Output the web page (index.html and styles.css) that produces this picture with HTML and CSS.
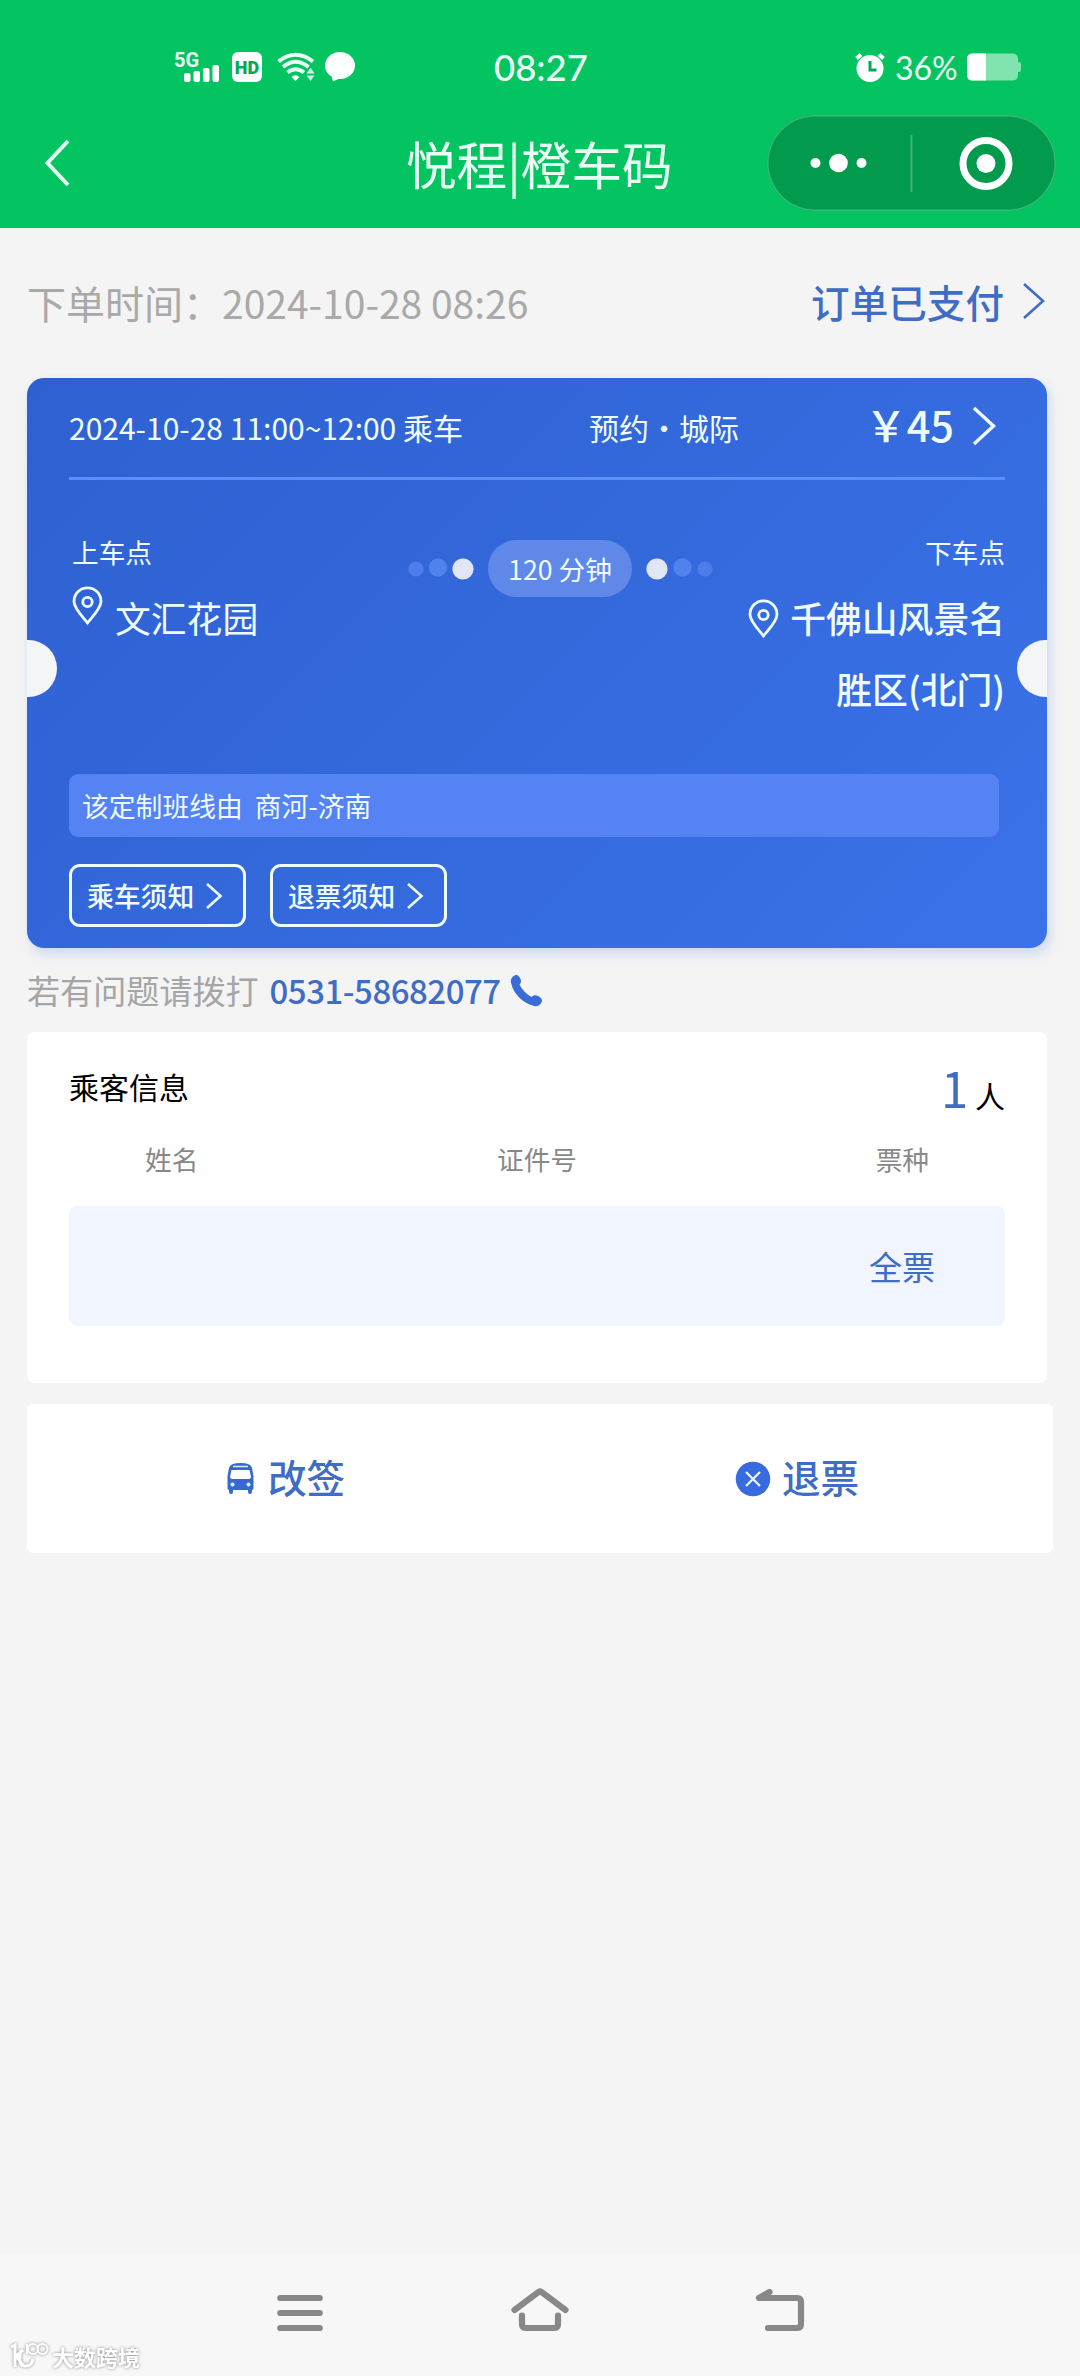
FILE: index.html
```html
<!DOCTYPE html>
<html lang="zh-CN">
<head>
<meta charset="utf-8">
<title>悦程|橙车码</title>
<link rel="stylesheet" href="styles.css">
</head>
<body>
<div class="screen">
  <header class="top">
    <div class="status">
      <div class="status-left">
        <div class="signal">
          <span class="signal-label">5G</span>
          <svg width="36" height="18" viewBox="0 0 36 18" fill="#fff"><rect x="0" y="9" width="6.5" height="9" rx="2"/><rect x="9.5" y="7" width="6.500" height="11" rx="2"/><rect x="19" y="4" width="6.500" height="14" rx="2"/><rect x="28.500" y="1" width="6.500" height="17" rx="2"/></svg>
        </div>
        <span class="hd">HD</span>
        <svg class="wifi" width="38" height="30" viewBox="0 0 38 30" fill="none" stroke="#e9fff3" stroke-width="4"><path d="M1.500 9.500Q18.500-4 36 9.500"/><path d="M6 15Q18.500 4.500 31.500 15"/><path d="M10.500 20.500Q18.500 14 27 20.500"/><path d="M14.500 25Q18.500 21.500 22.500 25L18.500 29Z" fill="#fff" stroke="none"/><path d="M29.500 21.500L33.500 15.500L37.500 21.500ZM29.500 23.500H37.500L33.500 29Z" fill="#c9f5dc" stroke="none"/></svg>
        <svg width="30" height="30" viewBox="0 0 30 30" fill="#fff"><ellipse cx="15" cy="13.500" rx="15" ry="13.500"/><path d="M6 22L8 29.500L18 25Z"/></svg>
      </div>
      <span class="clock">08:27</span>
      <div class="status-right">
        <svg width="30" height="30" viewBox="0 0 30 30"><circle cx="15" cy="16.500" r="13.500" fill="#fff"/><path d="M1.500 6.500L6 2.500M28.500 6.500L24 2.500" stroke="#fff" stroke-width="4"/><path d="M15 9V18H21.500" fill="none" stroke="#04a955" stroke-width="3"/></svg>
        <span class="percent">36%</span>
        <svg width="55" height="28" viewBox="0 0 55 28"><path d="M6 0.500H45Q51 0.500 51 6V9H52Q54 9 54 12V16Q54 19 52 19H51V22Q51 27.500 45 27.500H6Q0 27.500 0 22V6Q0 0.500 6 0.500Z" fill="#80e3b0"/><path d="M6 0.500H19V27.500H6Q0 27.500 0 22V6Q0 0.500 6 0.500Z" fill="#fff"/></svg>
      </div>
    </div>
    <div class="titlebar">
      <svg class="back" width="28" height="50" viewBox="0 0 28 50" fill="none" stroke="#e6fff1" stroke-width="4"><path d="M26 3L5.500 25L26 47"/></svg>
      <h1 class="title">悦程|橙车码</h1>
      <div class="capsule">
        <svg width="289" height="96" viewBox="0 0 289 96"><g fill="#fff"><circle cx="48.500" cy="48" r="5"/><circle cx="71.500" cy="48" r="9.300"/><circle cx="94.500" cy="48" r="5"/><circle cx="219" cy="48.500" r="9.500"/></g><path d="M144.500 20V77" stroke="#40b57b" stroke-width="1.800"/><circle cx="219" cy="48.500" r="23" fill="none" stroke="#fff" stroke-width="7"/></svg>
      </div>
    </div>
  </header>

  <main class="content">
    <div class="order-row">
      <span class="order-time">下单时间：2024-10-28 08:26</span>
      <span class="order-state">订单已支付
        <svg width="24" height="38" viewBox="0 0 24 38" fill="none" stroke="#3f6cc4" stroke-width="2.600"><path d="M2 2L21 19L2 36"/></svg>
      </span>
    </div>

    <section class="ticket">
      <div class="ticket-head">
        <span>2024-10-28 11:00~12:00 乘车</span>
        <span class="kind">预约・城际</span>
        <span class="price">￥45<svg width="26" height="42" viewBox="0 0 26 42" fill="none" stroke="#effcff" stroke-width="3.400"><path d="M3 3L22.500 21L3 39"/></svg></span>
      </div>
      <div class="route">
        <div class="stop stop-start">
          <div class="stop-label">上车点</div>
          <div class="stop-name">
            <svg class="pin pin-start" width="31" height="39" viewBox="0 0 31 39" fill="none" stroke="#effcff" stroke-width="2.800"><path d="M15.500 37C11 31 2 22.500 2 15.500C2 7.500 8 1.800 15.500 1.800S29 7.500 29 15.500C29 22.500 20 31 15.500 37Z"/><circle cx="15.500" cy="16" r="4.700"/></svg>
            <span>文汇花园</span>
          </div>
        </div>
        <div class="duration">
          <svg width="60" height="24" viewBox="0 0 60 24"><circle cx="13" cy="12" r="7.600" fill="#4c7deb"/><circle cx="35" cy="10.500" r="9.200" fill="#5082ee"/><circle cx="60" cy="12" r="10.600" fill="#e0e6f6"/></svg>
          <span class="pill">120 分钟</span>
          <svg width="60" height="24" viewBox="0 0 60 24"><circle cx="0" cy="12" r="10.600" fill="#e0e6f6"/><circle cx="25.500" cy="10.500" r="9.200" fill="#5082ee"/><circle cx="48" cy="12" r="7.600" fill="#4c7deb"/></svg>
        </div>
        <div class="stop stop-end">
          <div class="stop-label">下车点</div>
          <div class="stop-name">
            <svg class="pin" width="31" height="39" viewBox="0 0 31 39" fill="none" stroke="#effcff" stroke-width="2.800"><path d="M15.500 37C11 31 2 22.500 2 15.500C2 7.500 8 1.800 15.500 1.800S29 7.500 29 15.500C29 22.500 20 31 15.500 37Z"/><circle cx="15.500" cy="16" r="4.700"/></svg>
            <span>千佛山风景名<br>胜区(北门)</span>
          </div>
        </div>
      </div>
      <div class="line-note">该定制班线由  商河-济南</div>
      <div class="notices">
        <span class="notice">乘车须知<svg width="20" height="28" viewBox="0 0 20 28" fill="none" stroke="#effcff" stroke-width="2.600"><path d="M3 2L16.500 14L3 26"/></svg></span>
        <span class="notice">退票须知<svg width="20" height="28" viewBox="0 0 20 28" fill="none" stroke="#effcff" stroke-width="2.600"><path d="M3 2L16.500 14L3 26"/></svg></span>
      </div>
    </section>

    <div class="help">
      <span>若有问题请拨打</span>
      <span class="phone">0531-58682077</span>
      <svg width="33" height="33" viewBox="0 0 33 33"><path d="M4.500 1.500C7 0 9.500 2 10.500 5C11.500 7.500 11 9 9.500 10.500C12 15.500 16 20 21.500 23C23.500 21 25.500 20.500 28 22C31 23.500 33 26 31.500 28.500C30 31.500 27 33 24 32C12 28.500 3 19.500 1 8.500C0.500 5.500 1.500 3 4.500 1.500Z" fill="#3a6cd8"/></svg>
    </div>

    <section class="passengers">
      <div class="passengers-head">
        <span>乘客信息</span>
        <span><b class="count">1</b> 人</span>
      </div>
      <div class="columns"><span>姓名</span><span>证件号</span><span>票种</span></div>
      <div class="passenger">全票</div>
    </section>

    <section class="actions">
      <span class="action">
        <svg width="29" height="33" viewBox="0 0 29 33"><path d="M1.500 26V14L3 6Q4 1 14.500 1T26 6L27.500 14V26Q27.500 28 26 28V30Q26 32 24 32T22 30V28H7V30Q7 32 5 32T3 30V28Q1.500 28 1.500 26Z" fill="#3a68d2"/><path d="M7 4.500H22" stroke="#dfe9ff" stroke-width="1.500"/><path d="M5.500 8H23.500L25 15Q25 17 22.500 17H6.500Q4 17 4 15Z" fill="#fff"/><circle cx="6.500" cy="22.500" r="2" fill="#dff2ff"/><circle cx="22.500" cy="22.500" r="2" fill="#dff2ff"/></svg>
        <span class="action-label">改签</span>
      </span>
      <span class="action action-refund">
        <svg width="36" height="36" viewBox="0 0 36 36"><circle cx="18" cy="18" r="17.300" fill="#386ae0"/><path d="M11 11L25 25M25 11L11 25" stroke="#e5f4ff" stroke-width="2.300"/></svg>
        <span class="action-label">退票</span>
      </span>
    </section>
  </main>

  <nav class="navbar">
    <svg width="60" height="50" viewBox="0 0 60 50" fill="none" stroke="#888" stroke-width="6.200" stroke-linecap="round"><path d="M10.300 10H49.700M10.300 25H49.700M10.300 40H49.700"/></svg>
    <svg width="60" height="50" viewBox="0 0 60 50" fill="none" stroke="#888" stroke-width="6.200" stroke-linecap="round" stroke-linejoin="round"><path d="M4.500 22L28.500 4Q30 3 31.500 4L55.500 22M12 27.500V36Q12 40 16 40H44Q48 40 48 36V27.500"/></svg>
    <svg width="60" height="50" viewBox="0 0 60 50" fill="none" stroke="#888" stroke-width="6.200" stroke-linecap="round" stroke-linejoin="round"><path d="M29.500 4L19 10H57Q61 10 61 14V36Q61 40 57 40H28" transform="translate(-10)"/></svg>
  </nav>
  <div class="watermark">
    <svg width="40" height="28" viewBox="0 0 40 28" fill="none" stroke="#fff" stroke-width="3"><path d="M2 5L6 3V25M14 8L7 14L14 23M12 8Q8 25 17 24Q23 24 24 17"/><path d="M18 2V12" stroke-width="2"/><circle cx="24" cy="7" r="5" stroke-width="2"/><circle cx="33.500" cy="7" r="5" stroke-width="2"/></svg>
    <span>大数跨境</span>
  </div>
</div>
</body>
</html>
```
FILE: styles.css
```css
* { box-sizing: border-box; }
body {
  margin: 0;
  background: #f4f4f4;
  font-family: "Noto Sans CJK SC", sans-serif;
  color: #000;
}
svg { display: block; flex: none; overflow: visible; }
.screen {
  position: relative;
  display: flex;
  flex-direction: column;
  width: 1080px;
  height: 2376px;
  overflow: hidden;
}

/* Green status bar and mini-program title */
.top {
  height: 228px;
  padding-top: 43px;
  background: #04c361;
  color: #e9fff3;
}
.status {
  display: grid;
  grid-template-columns: 320px 1fr auto;
  align-items: center;
  height: 46px;
  padding: 0 58px 0 174px;
}
.status-left { display: flex; align-items: center; }
.signal {
  position: relative;
  width: 58px;
  height: 30px;
  padding: 12px 0 0 10px;
}
.signal-label {
  position: absolute;
  left: 0;
  top: -2px;
  font: 700 20px/20px Roboto, sans-serif;
}
.hd {
  width: 30px;
  height: 30px;
  margin-right: 15px;
  border-radius: 6px;
  background: #fff;
  color: #04a955;
  font: 900 18px/31px Roboto, sans-serif;
  text-align: center;
}
.wifi { margin-right: 10px; }
.clock { font: 500 36.500px/46px Lato, sans-serif; padding-top: 1px; }
.status-right { display: flex; align-items: center; }
.percent {
  width: 72px;
  margin: 2px 0 0 10px;
  font: 400 32px/40px Lato, sans-serif;
}
.titlebar {
  display: grid;
  grid-template-columns: 364px auto 1fr;
  align-items: center;
  height: 96px;
  margin-top: 26px;
  padding: 0 24px 0 42px;
}
.title {
  margin: 0;
  width: 268px;
  font-size: 50.600px;
  font-weight: 400;
  line-height: 96px;
  white-space: nowrap;
}
.capsule {
  justify-self: end;
  width: 289px;
  height: 96px;
  border-radius: 48px;
  background: #029b4e;
  box-shadow: inset 0 0 0 1.500px #37ba78;
}

/* Order page */
.content { flex: 1; padding: 0 33px 0 27px; }
.order-row {
  display: flex;
  justify-content: space-between;
  height: 150px;
  font-size: 39px;
  line-height: 148px;
  color: #a9a9a9;
}
.order-state {
  display: flex;
  align-items: center;
  gap: 18px;
  height: 146px;
  padding-right: 1px;
  font-size: 38.600px;
  font-weight: 500;
  line-height: 142px;
  color: #3f6cc4;
}
.ticket {
  position: relative;
  height: 570px;
  padding: 0 42px;
  border-radius: 17px;
  background: linear-gradient(135deg, #2e60d0 0%, #3469dc 50%, #3b72ea 100%);
  box-shadow: 3px 6px 12px rgba(52, 105, 220, 0.2);
  color: #effcff;
}
.ticket::before, .ticket::after {
  content: "";
  position: absolute;
  top: 262px;
  width: 30px;
  height: 57px;
  background: #f4f5f7;
}
.ticket::before { left: 0; border-radius: 0 28.500px 28.500px 0; }
.ticket::after { right: 0; border-radius: 28.500px 0 0 28.500px; }
.ticket-head {
  display: grid;
  grid-template-columns: 520px 1fr auto;
  align-items: center;
  height: 102px;
  border-bottom: 3px solid #5b8ff9;
  font-size: 30px;
  line-height: 97px;
}
.price {
  display: flex;
  align-items: center;
  gap: 17px;
  padding-right: 8px;
  font-size: 41.500px;
  font-weight: 500;
  line-height: 90px;
  margin-top: -7px;
}
.price svg { margin-top: 3px; }
.route {
  display: flex;
  justify-content: space-between;
  height: 294px;
  padding: 52px 0 0 3px;
}
.stop { width: 260px; }
.stop-start { width: 303px; }
.stop-label { font-size: 26.700px; line-height: 40px; }
.stop-name {
  display: flex;
  gap: 12px;
  padding-top: 10px;
  font-size: 35.800px;
  line-height: 71px;
}
.stop-end { text-align: right; }
.stop-end .stop-name { justify-content: flex-end; font-weight: 500; gap: 11px; }
.pin { margin-top: 17px; }
.pin-start { margin-top: 4px; }
.duration { display: flex; align-items: center; gap: 25px; height: 57px; margin-top: 8px; }
.pill {
  width: 144px;
  border-radius: 29px;
  background: #5f88e8;
  font-size: 26.700px;
  line-height: 57px;
  text-align: center;
}
.line-note {
  width: 930px;
  height: 63px;
  padding-left: 13px;
  border-radius: 9px;
  background: #5583f4;
  font-size: 26.800px;
  line-height: 63px;
  white-space: pre;
}
.notices { display: flex; gap: 24px; margin-top: 27px; }
.notice {
  display: flex;
  align-items: center;
  gap: 10px;
  width: 177px;
  height: 63px;
  padding-left: 15px;
  border: 3px solid #effcff;
  border-radius: 11px;
  font-size: 26.800px;
  font-weight: 500;
  line-height: 60px;
}
.help {
  display: flex;
  align-items: center;
  height: 84px;
  font-size: 33.100px;
  line-height: 84px;
  color: #a5a5a5;
}
.phone {
  margin: 0 9px 0 11px;
  font-size: 33px;
  font-weight: 500;
  letter-spacing: -0.500px;
  color: #3f6cc4;
}

/* Passenger list */
.passengers {
  height: 351px;
  padding: 0 42px;
  border-radius: 8px;
  background: #fff;
}
.passengers-head {
  display: flex;
  justify-content: space-between;
  height: 100px;
  font-size: 30px;
  line-height: 109px;
}
.count { font-size: 49px; font-weight: 400; color: #3f6cc4; }
.columns {
  display: flex;
  justify-content: space-between;
  height: 74px;
  padding: 0 76px;
  font-size: 26.700px;
  line-height: 54px;
  color: #888;
}
.passenger {
  height: 120px;
  padding-right: 70px;
  border-radius: 8px;
  background: #f0f5ff;
  font-size: 33px;
  line-height: 121px;
  text-align: right;
  color: #3f6cc4;
}
.actions {
  display: grid;
  grid-template-columns: 1fr 1fr;
  width: 1026px;
  height: 149px;
  margin-top: 21px;
  border-radius: 6px;
  background: #fff;
}
.action {
  display: flex;
  align-items: center;
  gap: 13px;
  padding-left: 199px;
  font-size: 38.600px;
  font-weight: 500;
  color: #3f6cc4;
}
.action-label { line-height: 144px; padding-bottom: 5px; }
.action-refund { padding-left: 195px; gap: 11px; }

/* System navigation */
.navbar {
  display: flex;
  justify-content: center;
  gap: 180px;
  height: 123px;
  padding-top: 35px;
  background: #f7f7f7;
}
.watermark {
  position: absolute;
  left: 9px;
  bottom: 6px;
  display: flex;
  gap: 3px;
  font-size: 22px;
  font-weight: 700;
  line-height: 28px;
  color: #fff;
  filter: drop-shadow(0 0 1.500px #888);
}
```
